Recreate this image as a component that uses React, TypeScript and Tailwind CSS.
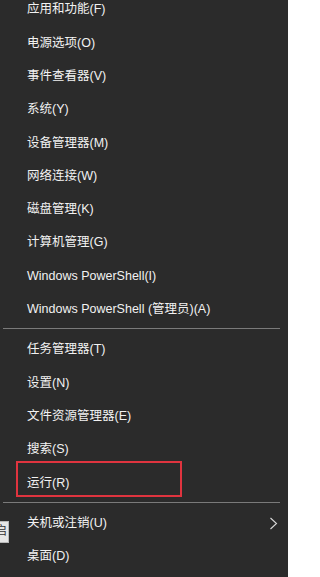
const groups: string[][] = [
  [
    '应用和功能(F)',
    '电源选项(O)',
    '事件查看器(V)',
    '系统(Y)',
    '设备管理器(M)',
    '网络连接(W)',
    '磁盘管理(K)',
    '计算机管理(G)',
    'Windows PowerShell(I)',
    'Windows PowerShell (管理员)(A)',
  ],
  ['任务管理器(T)', '设置(N)', '文件资源管理器(E)', '搜索(S)', '运行(R)'],
  ['关机或注销(U)', '桌面(D)'],
];

function Separator() {
  return (
    <div className="h-[7px] pt-[2.5px]">
      <div className="ml-[3px] mr-[8px] h-px bg-[#7a7a7a]" />
    </div>
  );
}

function MenuItem({ label }: { label: string }) {
  const isRun = label === '运行(R)';
  const hasSub = label === '关机或注销(U)';
  const isDesktop = label === '桌面(D)';

  return (
    <div className="relative flex h-[33.3px] items-center pl-[27px] pr-[10px]">
      <span className="text-[12.5px] leading-none text-[#f2f2f2]">{label}</span>

      {hasSub && (
        <svg
          className="ml-auto h-[13px] w-[9px]"
          viewBox="0 0 9 13"
          fill="none"
          stroke="#d8d8d8"
          strokeWidth="1.1"
        >
          <path d="M1.5 1 L7.5 6.5 L1.5 12" />
        </svg>
      )}

      {/* red highlight frame */}
      {isRun && (
        <div className="pointer-events-none absolute left-[16px] top-[-5px] h-[36px] w-[166px] border-2 border-[#e0343f]" />
      )}

      {/* clipped tooltip at left edge */}
      {isDesktop && (
        <div className="absolute left-0 top-[-19px] h-[22px] w-[9px] overflow-hidden border border-l-0 border-[#b8b8b8] bg-[#e6e6e6]">
          <span className="absolute right-[1px] top-[3px] text-[12px] leading-none text-[#333]">启</span>
        </div>
      )}
    </div>
  );
}

export default function App() {
  return (
    <div
      className="h-[577px] w-[288px] overflow-hidden bg-[#2b2b2b]"
      style={{ fontFamily: '"Liberation Sans", "Noto Sans CJK SC", sans-serif' }}
    >
      <div className="-mt-[7px]">
        {groups.map((items, gi) => (
          <div key={gi}>
            {gi > 0 && <Separator />}
            {items.map(label => (
              <MenuItem key={label} label={label} />
            ))}
          </div>
        ))}
      </div>
    </div>
  );
}
